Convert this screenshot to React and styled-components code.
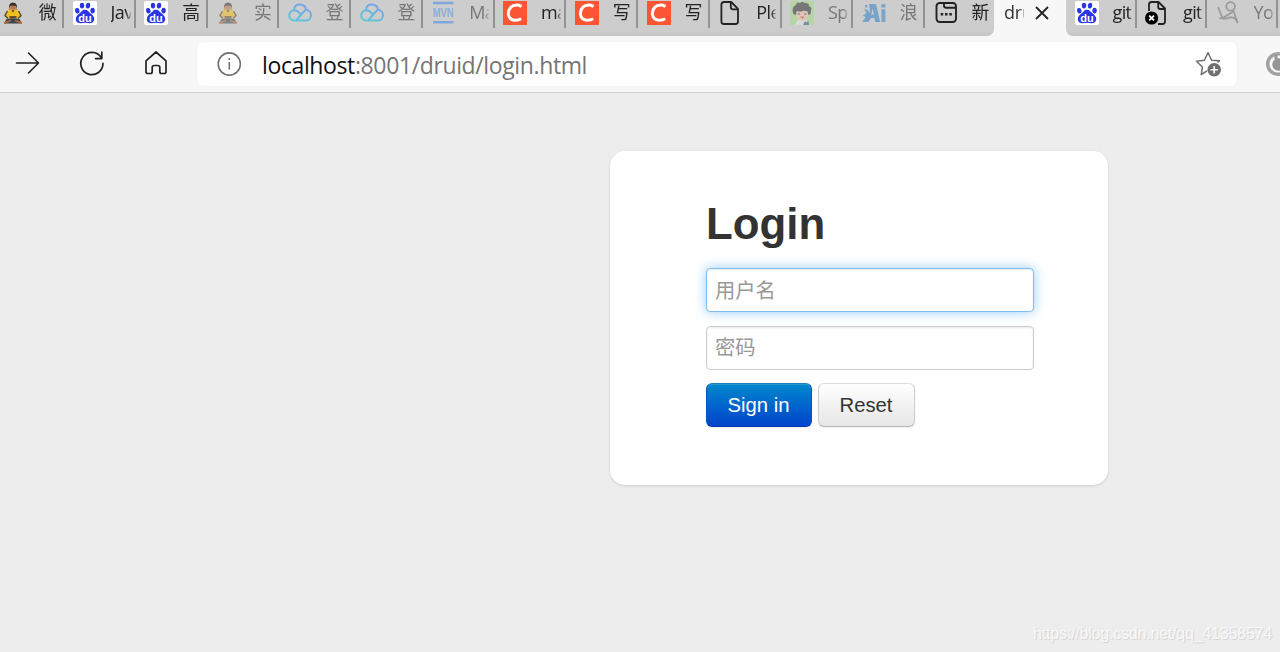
import React from "react";
import styled, { createGlobalStyle } from "styled-components";

const Monk = () => (
  <svg width='24' height='24' viewBox='0 0 24 24'>
    <path d='M7.5 9L8.5 5.5L15.5 5.5L16.5 9Z' fill='#c78c55' />
    <path d='M8 7Q7.6 1.6 12 1.4Q16.4 1.6 16 7L14.6 5H9.4Z' fill='#3a302c' />
    <path d='M9.4 4.8H14.6V7.5Q12 10 9.4 7.5Z' fill='#b97852' />
    <path d='M7 9.4L10 8.6H14L17 9.4L19.6 14L17 17.5H7L4.4 14Z' fill='#efc021' />
    <path d='M6.4 10L4 14.5L7 17.5M17.6 10L20 14.5L17 17.5' stroke='#5d4c34' strokeWidth='1.5' fill='none' />
    <path d='M10.4 8.8L12 12L13.6 8.8ZM8.5 15H15.5V17.3H8.5Z' fill='#6b4d30' />
    <path d='M5 18.5Q12 16 19 18.5L20.5 22.5H3.5Z' fill='#37454d' />
    <path d='M3 22.2L10 19.5M21 22.2L14 19.5' stroke='#b5653a' strokeWidth='1.8' />
  </svg>
);

const Baidu = () => (
  <svg width='24' height='24' viewBox='0 0 24 24'>
    <rect width='24' height='24' rx='2' fill='#fff' />
    <g fill='#2b35e4'>
      <ellipse cx='4.3' cy='9.8' rx='2.2' ry='2.8' transform='rotate(-12 4.3 9.8)' />
      <ellipse cx='9' cy='4.6' rx='2.2' ry='2.9' />
      <ellipse cx='15' cy='4.6' rx='2.2' ry='2.9' transform='rotate(9 15 4.6)' />
      <ellipse cx='19.6' cy='9.6' rx='2.2' ry='2.8' />
      <path d='M12 8.8C9 8.8 8.7 11 6.3 12.6C.8 16.4 2.2 22.6 7.5 22.2Q12 21.2 16.5 22.2C21.8 22.6 23.2 16.4 18 12.8C15.2 10.8 14.8 8.8 12 8.8Z' />
    </g>
    <text x='12' y='20.6' textAnchor='middle' fontFamily='Liberation Sans, sans-serif' fontWeight='bold' fontSize='11' fill='#fff'>
      du
    </text>
  </svg>
);

const Cloud = () => (
  <svg width='24' height='24' viewBox='0 0 24 24' fill='none'>
    <defs>
      <linearGradient id='cloud' x1='0' y1='24' x2='12' y2='2' gradientUnits='userSpaceOnUse'>
        <stop offset='0' stopColor='#54d6d2' />
        <stop offset='1' stopColor='#76a3e6' />
      </linearGradient>
    </defs>
    <g stroke='url(#cloud)' strokeWidth='2' strokeLinecap='round'>
      <path d='M6 8.4C7 1.8 17 1.8 18 8.8C24.5 9.2 24.8 19.4 18 19.4H6.5C-.6 19.4 -.4 9.2 6.3 9.2Q8.5 9.2 10.2 10.8L13 13.6' />
      <path d='M9 18.5L15.4 11Q16.6 9.4 18 8.9' />
    </g>
  </svg>
);

const Mvn = () => (
  <svg width='24' height='24' viewBox='0 0 24 24' fill='none' stroke='#80a8dc'>
    <path d='M2 2H22.5M2 21.3H22.5' strokeWidth='2.4' />
    <text x='12.2' y='16.2' textAnchor='middle' textLength='21' lengthAdjust='spacingAndGlyphs' fontFamily='Liberation Sans, sans-serif' fontWeight='bold' fontSize='13' fill='#8baddb' stroke='none'>
      MVN
    </text>
  </svg>
);

const Csdn = () => (
  <svg width='24' height='24' viewBox='0 0 24 24'>
    <rect width='24' height='24' fill='#fc5531' />
    <path d='M18.6 5.4Q12 2.4 7.9 6.2Q4.9 9.4 5.5 13.8Q6.4 18.9 11.8 19.2Q15.2 19.4 18.2 17.8' stroke='#fff' strokeWidth='3' fill='none' />
  </svg>
);

const Page = () => (
  <svg width='24' height='24' viewBox='0 0 24 24' fill='none' stroke='#222' strokeWidth='1.8' strokeLinejoin='round'>
    <path d='M6 1H13.2L20 7.8V20.5Q20 23 17.5 23H6Q3.4 23 3.4 20.5V3.5Q3.4 1 6 1Z' />
    <path d='M12.8 1V6Q12.8 8.4 15.2 8.4H20' />
  </svg>
);

const BadPage = () => (
  <svg width='24' height='24' viewBox='0 0 24 24' fill='none' stroke='#222' strokeWidth='1.8' strokeLinejoin='round'>
    <path d='M4 10V3.5Q4 1 6.5 1H13.5L20 7.5V20.5Q20 23 17.5 23H13' />
    <path d='M13.2 1V6Q13.2 8 15.2 8H20' />
    <circle cx='6.6' cy='17' r='6.6' fill='#000' stroke='none' />
    <path d='M4.2 14.6L9 19.4M9 14.6L4.2 19.4' stroke='#fff' />
  </svg>
);

const Boy = () => (
  <svg width='24' height='24' viewBox='0 0 24 24'>
    <rect width='24' height='24' fill='#b5d5a5' />
    <path d='M5 24L8 18.5H16L19 24Z' fill='#d9d9d6' />
    <ellipse cx='12' cy='13' rx='6.2' ry='6.6' fill='#e0c4b6' />
    <path d='M3.4 13Q1.6 8 4 5L6 4L7 1.5L10 2L12 .7L15 2L18.5 2.5L19 5L21.5 7L20.5 13L18.3 14L17.6 10.6L14 9.8L10 10.8L6.8 10L5.8 14Z' fill='#77777a' />
    <path d='M7.5 13H10M14 13H16.5' stroke='#77777a' />
    <path d='M10 15.5H14.5L12.5 18Z' fill='#ca8179' />
    <path d='M13 24L15 20L16.5 21.5L18.5 20L19 24Z' fill='#768fa0' />
  </svg>
);

const Ai = () => (
  <svg width='24' height='24' viewBox='0 0 24 24' fill='#78a4c9'>
    <path d='M7 3H14L18.2 21H13.2L12.4 17H9L6.5 21H0L8 10Z' />
    <path d='M2 7.5L6.5 9.5L7 13L4 16.5L1 14.5L4.4 12Z' />
    <path d='M3.2 4H5.4V6.4H3.2ZM19.4 8.2H23.4V21H19.4ZM19.4 3.2H23.4V6.6H19.4Z' />
    <path d='M10.8 8L12 13.5H9Z' fill='#cdcdcd' />
  </svg>
);

const NewTab = () => (
  <svg width='24' height='24' viewBox='0 0 24 24' fill='none' stroke='#222' strokeWidth='1.9'>
    <rect x='2.5' y='2' width='19.5' height='19' rx='3.2' />
    <path d='M10 2V4.5Q10 6.7 12.2 6.7H22' />
    <path d='M6.7 13.3H9.2M11 13.3H13.5M15.3 13.3H17.8' strokeWidth='2.5' />
  </svg>
);

const Figure = () => (
  <svg width='24' height='24' viewBox='0 0 24 24' fill='none' stroke='#9b9b9b' strokeWidth='1.8'>
    <circle cx='14.6' cy='5.4' r='4.3' />
    <path d='M2 6Q4.5 12 6.5 17.2L17.5 10.2Q19.5 16 21.8 22Q19 16 14.5 16.2Q9 18.6 3.4 17' />
  </svg>
);

const leftTabs = [
  { icon: <Monk />, title: "微" },
  { icon: <Baidu />, title: "Jav" },
  { icon: <Baidu />, title: "高" },
  { icon: <Monk />, title: "实", faded: true },
  { icon: <Cloud />, title: "登", dim: true },
  { icon: <Cloud />, title: "登", dim: true },
  { icon: <Mvn />, title: "Ma", dim: true },
  { icon: <Csdn />, title: "ma" },
  { icon: <Csdn />, title: "写" },
  { icon: <Csdn />, title: "写" },
  { icon: <Page />, title: "Ple" },
  { icon: <Boy />, title: "Sp", dim: true },
  { icon: <Ai />, title: "浪", dim: true },
  { icon: <NewTab />, title: "新" },
];

const rightTabs = [
  { icon: <Baidu />, title: "git" },
  { icon: <BadPage />, title: "git" },
  { icon: <Figure />, title: "Yo", dim: true },
];

const TabList = ({ tabs, width }) =>
  tabs.map((tab, i) => (
    <Tab key={i} $width={width}>
      <TabIcon $faded={tab.faded}>{tab.icon}</TabIcon>
      <TabTitle $dim={tab.dim || tab.faded}>{tab.title}</TabTitle>
    </Tab>
  ));

const App = () => {
  return (
    <>
      <GlobalStyle />
      <Window>
        <TabStrip>
          <LeftTabs>
            <TabList tabs={leftTabs} width={71.75} />
          </LeftTabs>
          <ActiveTab>
            <ActiveTitle>dru</ActiveTitle>
            <svg width='14' height='14' viewBox='0 0 14 14' stroke='#222' strokeWidth='1.8'>
              <path d='M1 1L13 13M13 1L1 13' />
            </svg>
          </ActiveTab>
          <RightTabs>
            <TabList tabs={rightTabs} width={70.5} />
          </RightTabs>
        </TabStrip>
        <Toolbar>
          <NavButtons>
            <svg width='26' height='26' viewBox='0 0 26 26' fill='none' stroke='#222' strokeWidth='1.6' strokeLinecap='round' strokeLinejoin='round'>
              <path d='M1.5 13H23.5M13.5 3L23.5 13L13.5 23' />
            </svg>
            <svg width='26' height='26' viewBox='0 0 26 26' fill='none' stroke='#222' strokeWidth='1.7' strokeLinecap='round' strokeLinejoin='round'>
              <path d='M22.2 7.5A11.1 11.1 0 1 0 24 13.4' />
              <path d='M22.8 2V8.6H16.6' />
            </svg>
            <svg width='26' height='26' viewBox='0 0 26 26' fill='none' stroke='#222' strokeWidth='1.7' strokeLinejoin='round'>
              <path d='M13 2L23 10.8V21.7Q23 23.5 21 23.5H18.5Q16.8 23.5 16.8 21.5V17.5Q16.8 15.5 14.8 15.5H11.2Q9.2 15.5 9.2 17.5V21.5Q9.2 23.5 7.5 23.5H5Q3 23.5 3 21.7V10.8Z' />
            </svg>
          </NavButtons>
          <AddressBar>
            <svg width='24' height='24' viewBox='0 0 24 24' fill='none' stroke='#717171' strokeWidth='1.6'>
              <circle cx='12.3' cy='12' r='11.1' />
              <path d='M12.3 10V17.5M12.3 6V8' />
            </svg>
            <Url>
              <Host>localhost</Host>:8001/druid/login.html
            </Url>
            <svg width='28' height='28' viewBox='0 0 28 28' fill='none' stroke='#707070' strokeWidth='1.5' strokeLinejoin='round'>
              <path d='M11.8 21L6.2 24.6L7.5 17.2L1.5 11.3L9.5 10.2L13 2.5L16.6 10.2L24.5 10.8L22.5 12.4' />
              <circle cx='19.2' cy='19.8' r='6.8' fill='#707070' stroke='none' />
              <path d='M15.5 19.8H22.9M19.2 16.1V23.5' stroke='#fff' />
            </svg>
          </AddressBar>
          <Extension>
            <svg width='24' height='24' viewBox='0 0 24 24' fill='none'>
              <circle cx='12' cy='12' r='10.3' stroke='#a0a0a0' strokeWidth='3.4' />
              <circle cx='12.5' cy='12.5' r='6.2' fill='#969696' />
              <path d='M10 3V7' stroke='#969696' strokeWidth='3' />
            </svg>
          </Extension>
        </Toolbar>
        <Content>
          <LoginCard>
            <Heading>Login</Heading>
            <Field type='text' placeholder='用户名' $focused />
            <Field type='password' placeholder='密码' />
            <Buttons>
              <Button $primary $width={106}>
                Sign in
              </Button>
              <Button $width={97}>Reset</Button>
            </Buttons>
          </LoginCard>
          <Watermark>https://blog.csdn.net/qq_41358574</Watermark>
        </Content>
      </Window>
    </>
  );
};

export default App;

const GlobalStyle = createGlobalStyle`
  * {
    box-sizing: border-box;
  }
  body {
    margin: 0;
    overflow: hidden;
  }
  svg {
    display: block;
    flex-shrink: 0;
  }
`;

const Window = styled.div`
  width: 1280px;
  height: 652px;
  display: flex;
  flex-direction: column;
  overflow: hidden;
  background: #ededed;
  font-family: "Liberation Sans", "Noto Sans CJK SC", sans-serif;
`;

const TabStrip = styled.div`
  height: 36px;
  flex-shrink: 0;
  display: flex;
  background: #f7f7f7;
`;

const LeftTabs = styled.div`
  width: 994px;
  height: 36px;
  display: flex;
  justify-content: flex-end;
  overflow: hidden;
  background: linear-gradient(#cdcdcd 31px, #c4c4c4);
  border-bottom-right-radius: 7px;

  & > :last-child {
    width: 69px;
    border-right: none;
  }
`;

const RightTabs = styled.div`
  width: 214px;
  height: 36px;
  display: flex;
  overflow: hidden;
  background: linear-gradient(#cdcdcd 31px, #c4c4c4);
  border-bottom-left-radius: 7px;
`;

const Tab = styled.div`
  width: ${(props) => props.$width}px;
  height: 28px;
  flex-shrink: 0;
  display: flex;
  padding: 1px 0 0 8.5px;
  border-right: 2px solid #929292;
`;

const TabIcon = styled.div`
  width: 24px;
  height: 24px;
  opacity: ${(props) => (props.$faded ? 0.55 : 1)};
`;

const TabTitle = styled.div`
  width: 20px;
  height: 26px;
  margin-left: 14px;
  overflow: hidden;
  white-space: nowrap;
  font-family: "Open Sans", "Noto Sans CJK SC", sans-serif;
  font-size: 18px;
  line-height: 23px;
  letter-spacing: -0.6px;
  color: ${(props) => (props.$dim ? "#777" : "#222")};
  mask-image: linear-gradient(to right, #000 75%, rgba(0, 0, 0, 0.2));
`;

const ActiveTab = styled.div`
  width: 72px;
  display: flex;
  padding: 6px 0 0 10px;
`;

const ActiveTitle = styled.div`
  width: 20px;
  height: 26px;
  margin: -5px 11px 0 0;
  overflow: hidden;
  font-family: "Open Sans", sans-serif;
  font-size: 18px;
  line-height: 23px;
  letter-spacing: -0.3px;
  color: #333;
  mask-image: linear-gradient(to right, #000 75%, rgba(0, 0, 0, 0.3));
`;

const Toolbar = styled.div`
  height: 57px;
  flex-shrink: 0;
  display: flex;
  align-items: center;
  background: #f7f7f7;
  border-bottom: 1px solid #d2d2d2;
`;

const NavButtons = styled.div`
  width: 197px;
  display: flex;
  gap: 38px;
  padding: 0 0 2px 15px;
`;

const AddressBar = styled.div`
  width: 1040px;
  height: 44px;
  display: flex;
  align-items: center;
  padding: 0 14px 0 20px;
  background: #fff;
  border-radius: 6px;
  box-shadow: 0 0 3px rgba(0, 0, 0, 0.06);
`;

const Url = styled.div`
  flex: 1;
  margin-left: 21px;
  padding-top: 1px;
  font-family: "Open Sans", "Noto Sans", sans-serif;
  font-size: 23px;
  line-height: 32px;
  letter-spacing: -0.38px;
  color: #757575;
`;

const Host = styled.span`
  color: #111;
`;

const Extension = styled.div`
  width: 14px;
  margin-left: 29px;
  overflow: hidden;
`;

const Content = styled.div`
  flex: 1;
  display: flex;
  flex-direction: column;
  justify-content: space-between;
  padding: 58px 8px 8px 610px;
`;

const LoginCard = styled.div`
  width: 498px;
  height: 334px;
  padding: 45px 74px 0 96px;
  background: #fff;
  border-radius: 15px;
  box-shadow: 0 1px 3px rgba(0, 0, 0, 0.13);
`;

const Heading = styled.h2`
  margin: 0 0 16px;
  font-size: 43.8px;
  line-height: 56px;
  color: #333;
`;

const Field = styled.input`
  display: block;
  width: 328px;
  height: 44px;
  margin-bottom: 14px;
  padding: ${(props) => (props.$focused ? "2px 8px 0" : "0 8px")};
  border: 1px solid ${(props) => (props.$focused ? "#7fbff2" : "#ccc")};
  border-radius: 4px;
  outline: none;
  background: #fff;
  box-shadow: inset 0 1px 2px rgba(0, 0, 0, 0.09)
    ${(props) => props.$focused && ", 0 0 12px rgba(82, 168, 236, 0.6)"};
  font-family: "Liberation Sans", "Noto Sans CJK SC", sans-serif;
  font-size: 20.3px;
  color: #555;

  &::placeholder {
    color: #999;
    font-weight: 400;
  }
`;

const Buttons = styled.div`
  display: flex;
  gap: 6px;
  margin-top: -1px;
`;

const Button = styled.button`
  width: ${(props) => props.$width}px;
  height: 44px;
  padding: 0 1px 0 0;
  border: 1px solid;
  border-color: ${(props) =>
    props.$primary ? "#1a82c0 #0555c0 #0339b0" : "#ddd #ccc #b8b8b8"};
  border-radius: 6px;
  background: ${(props) =>
    props.$primary
      ? "linear-gradient(#0088cc, #0044cc)"
      : "linear-gradient(#fff, #e6e6e6)"};
  box-shadow: inset 0 1px 0 rgba(255, 255, 255, 0.15),
    0 1px 2px rgba(0, 0, 0, 0.08);
  font-family: "Liberation Sans", sans-serif;
  font-size: 20.3px;
  color: ${(props) => (props.$primary ? "#fff" : "#333")};
`;

const Watermark = styled.div`
  align-self: flex-end;
  font-size: 16px;
  line-height: 20px;
  letter-spacing: -0.2px;
  color: #f8f8f8;
  text-shadow: 1px 1px 1px #d0d0d0;
`;
